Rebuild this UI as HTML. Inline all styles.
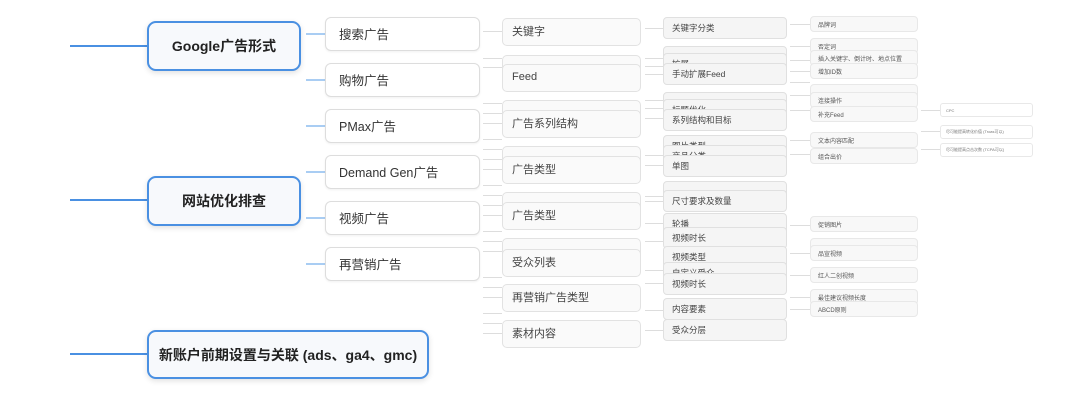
<!DOCTYPE html>
<html><head><meta charset="utf-8"><style>
body{margin:0;width:1080px;height:417px;background:#fff;position:relative;overflow:hidden;font-family:"Liberation Sans","Noto Sans CJK SC",sans-serif;}
div{position:absolute;box-sizing:border-box}
.l{height:2px;background:#4a90e2}
.ll{height:2px;background:#a9cdf3}
.g{height:1px;background:#ddd}
.m{background:#f7f9fc;border:2px solid #4a90e2;border-radius:9px;font-weight:bold;font-size:14px;color:#222;display:flex;align-items:center;justify-content:center;box-shadow:0 2px 6px rgba(0,0,0,.12)}
.b2,.b3,.b4,.b5,.b6{display:flex;align-items:center}
.b2{left:325px;width:155px;height:34px;background:#fff;border:1px solid #ddd;border-radius:6px;font-size:12.5px;color:#333;padding:0 0 2px 13px;box-shadow:0 1px 2px rgba(0,0,0,.06)}
.b3{left:502px;width:139px;height:28px;background:#fafafa;border:1px solid #e2e2e2;border-radius:5px;font-size:11px;color:#444;padding:0 0 2px 9px}
.b4{left:663px;width:124px;height:22px;background:#f5f5f5;border:1px solid #e0e0e0;border-radius:4px;font-size:8.5px;color:#444;padding:0 0 1px 8px}
.b5{left:810px;width:108px;height:16px;background:#f8f8f8;border:1px solid #e8e8e8;border-radius:4px;font-size:6px;color:#555;padding:0 0 0 7px}
.b6{left:940px;width:93px;height:14px;background:#fff;border:1px solid #e8e8e8;border-radius:3px;font-size:4px;color:#777;padding:0 0 0 5px}
</style></head><body>
<div class="l" style="left:70px;top:45px;width:78px"></div>
<div class="l" style="left:70px;top:199px;width:78px"></div>
<div class="l" style="left:70px;top:353px;width:78px"></div>
<div class="m" style="left:147px;top:21px;width:154px;height:50px">Google广告形式</div>
<div class="m" style="left:147px;top:176px;width:154px;height:50px">网站优化排查</div>
<div class="m" style="left:147px;top:330px;width:282px;height:49px">新账户前期设置与关联 (ads、ga4、gmc)</div>

<div class="ll" style="left:306px;top:33px;width:19px"></div>
<div class="ll" style="left:306px;top:79px;width:19px"></div>
<div class="ll" style="left:306px;top:125px;width:19px"></div>
<div class="ll" style="left:306px;top:171px;width:19px"></div>
<div class="ll" style="left:306px;top:217px;width:19px"></div>
<div class="ll" style="left:306px;top:263px;width:19px"></div>
<div class="b2" style="top:17px">搜索广告</div>
<div class="b2" style="top:63px">购物广告</div>
<div class="b2" style="top:109px">PMax广告</div>
<div class="b2" style="top:155px">Demand Gen广告</div>
<div class="b2" style="top:201px">视频广告</div>
<div class="b2" style="top:247px">再营销广告</div>

<div class="g" style="left:483px;top:31px;width:19px"></div>
<div class="g" style="left:483px;top:58px;width:19px"></div>
<div class="g" style="left:483px;top:67px;width:19px"></div>
<div class="g" style="left:483px;top:103px;width:19px"></div>
<div class="g" style="left:483px;top:113px;width:19px"></div>
<div class="g" style="left:483px;top:123px;width:19px"></div>
<div class="g" style="left:483px;top:139px;width:19px"></div>
<div class="g" style="left:483px;top:149px;width:19px"></div>
<div class="g" style="left:483px;top:159px;width:19px"></div>
<div class="g" style="left:483px;top:169px;width:19px"></div>
<div class="g" style="left:483px;top:185px;width:19px"></div>
<div class="g" style="left:483px;top:195px;width:19px"></div>
<div class="g" style="left:483px;top:205px;width:19px"></div>
<div class="g" style="left:483px;top:215px;width:19px"></div>
<div class="g" style="left:483px;top:231px;width:19px"></div>
<div class="g" style="left:483px;top:241px;width:19px"></div>
<div class="g" style="left:483px;top:251px;width:19px"></div>
<div class="g" style="left:483px;top:277px;width:19px"></div>
<div class="g" style="left:483px;top:287px;width:19px"></div>
<div class="g" style="left:483px;top:297px;width:19px"></div>
<div class="g" style="left:483px;top:313px;width:19px"></div>
<div class="g" style="left:483px;top:323px;width:19px"></div>
<div class="g" style="left:483px;top:333px;width:19px"></div>

<div class="b3" style="top:18px">关键字</div>
<div class="b3" style="top:55px"></div>
<div class="b3" style="top:64px">Feed</div>
<div class="b3" style="top:100px"></div>
<div class="b3" style="top:110px">广告系列结构</div>
<div class="b3" style="top:146px"></div>
<div class="b3" style="top:156px">广告类型</div>
<div class="b3" style="top:192px"></div>
<div class="b3" style="top:202px">广告类型</div>
<div class="b3" style="top:238px"></div>
<div class="b3" style="top:249px">受众列表</div>
<div class="b3" style="top:284px">再营销广告类型</div>
<div class="b3" style="top:320px">素材内容</div>

<div class="g" style="left:645px;top:28px;width:18px"></div>
<div class="g" style="left:645px;top:58px;width:18px"></div>
<div class="g" style="left:645px;top:66px;width:18px"></div>
<div class="g" style="left:645px;top:74px;width:18px"></div>
<div class="g" style="left:645px;top:100px;width:18px"></div>
<div class="g" style="left:645px;top:108px;width:18px"></div>
<div class="g" style="left:645px;top:118px;width:18px"></div>
<div class="g" style="left:645px;top:155px;width:18px"></div>
<div class="g" style="left:645px;top:165px;width:18px"></div>
<div class="g" style="left:645px;top:196px;width:18px"></div>
<div class="g" style="left:645px;top:201px;width:18px"></div>
<div class="g" style="left:645px;top:223px;width:18px"></div>
<div class="g" style="left:645px;top:241px;width:18px"></div>
<div class="g" style="left:645px;top:270px;width:18px"></div>
<div class="g" style="left:645px;top:283px;width:18px"></div>
<div class="g" style="left:645px;top:310px;width:18px"></div>
<div class="g" style="left:645px;top:330px;width:18px"></div>

<div class="b4" style="top:17px">关键字分类</div>
<div class="b4" style="top:46px"></div>
<div class="b4" style="top:53px">扩展</div>
<div class="b4" style="top:63px">手动扩展Feed</div>
<div class="b4" style="top:92px"></div>
<div class="b4" style="top:99px">标题优化</div>
<div class="b4" style="top:109px">系列结构和目标</div>
<div class="b4" style="top:135px">图片类型</div>
<div class="b4" style="top:145px">商品分类</div>
<div class="b4" style="top:155px">单图</div>
<div class="b4" style="top:181px"></div>
<div class="b4" style="top:190px">尺寸要求及数量</div>
<div class="b4" style="top:213px">轮播</div>
<div class="b4" style="top:227px">视频时长</div>
<div class="b4" style="top:246px">视频类型</div>
<div class="b4" style="top:262px">自定义受众</div>
<div class="b4" style="top:273px">视频时长</div>
<div class="b4" style="top:298px">内容要素</div>
<div class="b4" style="top:319px">受众分层</div>

<div class="g" style="left:790px;top:24px;width:20px"></div>
<div class="g" style="left:790px;top:46px;width:20px"></div>
<div class="g" style="left:790px;top:60px;width:20px"></div>
<div class="g" style="left:790px;top:71px;width:20px"></div>
<div class="g" style="left:790px;top:82px;width:20px"></div>
<div class="g" style="left:790px;top:95px;width:20px"></div>
<div class="g" style="left:790px;top:110px;width:20px"></div>
<div class="g" style="left:790px;top:140px;width:20px"></div>
<div class="g" style="left:790px;top:154px;width:20px"></div>
<div class="g" style="left:790px;top:225px;width:20px"></div>
<div class="g" style="left:790px;top:253px;width:20px"></div>
<div class="g" style="left:790px;top:275px;width:20px"></div>
<div class="g" style="left:790px;top:297px;width:20px"></div>
<div class="g" style="left:790px;top:309px;width:20px"></div>
<div class="b5" style="top:16px">品牌词</div>
<div class="b5" style="top:38px">否定词</div>
<div class="b5" style="top:50px">插入关键字、倒计时、地点位置</div>
<div class="b5" style="top:63px">增加ID数</div>
<div class="b5" style="top:84px"></div>
<div class="b5" style="top:92px">连接操作</div>
<div class="b5" style="top:106px">补充Feed</div>
<div class="b5" style="top:132px">文本内容匹配</div>
<div class="b5" style="top:148px">组合出价</div>
<div class="b5" style="top:216px">促销图片</div>
<div class="b5" style="top:238px"></div>
<div class="b5" style="top:245px">品宣视频</div>
<div class="b5" style="top:267px">红人二创视频</div>
<div class="b5" style="top:289px">最佳建议视频长度</div>
<div class="b5" style="top:301px">ABCD原则</div>

<div class="g" style="left:921px;top:110px;width:19px"></div>
<div class="g" style="left:921px;top:131px;width:19px"></div>
<div class="g" style="left:921px;top:149px;width:19px"></div>
<div class="b6" style="top:103px">CPC</div>
<div class="b6" style="top:125px">尽可能提高转化价值 (Troas可以)</div>
<div class="b6" style="top:143px">尽可能提高点击次数 (TCPA可以)</div>
</body></html>
